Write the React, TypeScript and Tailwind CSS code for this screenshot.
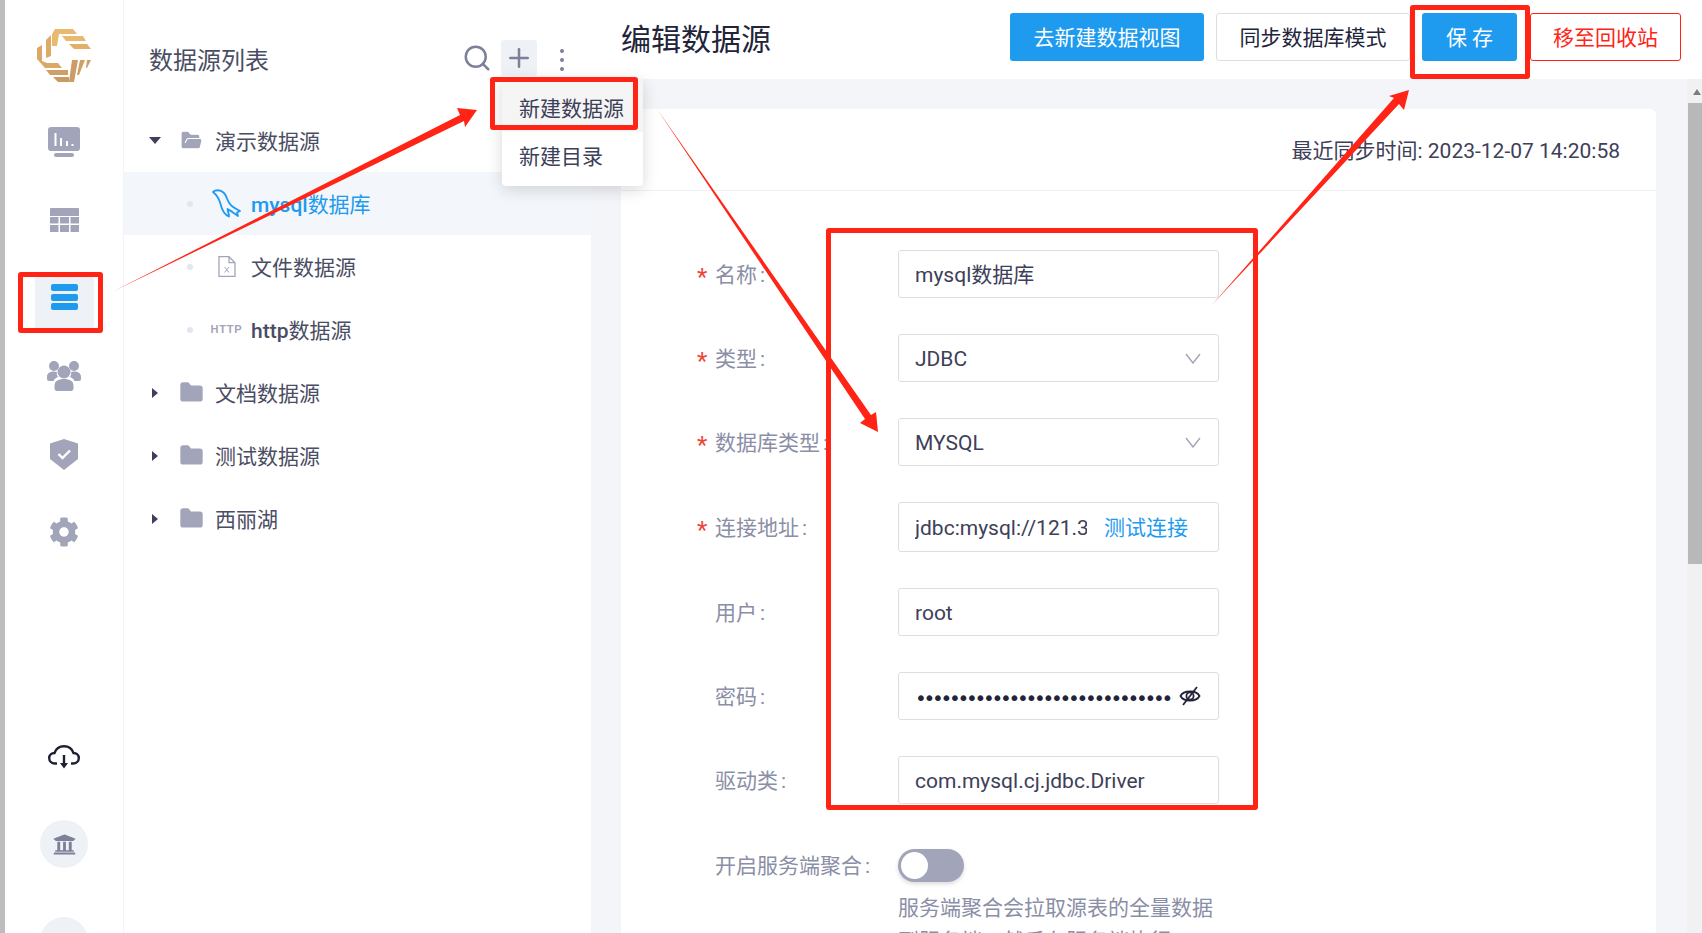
import { Plus, Search, Folder, FolderOpen } from "lucide-react";
import { FaCog, FaUniversity } from "react-icons/fa";

const font = "font-['Roboto','Noto_Sans_CJK_SC',sans-serif]";

function Logo() {
  return (
    <svg width="54" height="54" viewBox="0 0 54 54">
      <path d="M18 1H36L40 6H22L20 18H15V6Z" fill="#e8b96f" />
      <path d="M25 8H46L49 13H29Z" fill="#e8b96f" />
      <path d="M32 16H50L54 21H37Z" fill="#e0b06a" />
      <path d="M14 7V28L9 30V12Z" fill="#dcab66" />
      <path d="M0 20L5 17V33L10 35H21L25 40H8L0 31Z" fill="#d9a965" />
      <path d="M9 42H31V47H13Z" fill="#cfa066" />
      <path d="M16 49H32V54H21Z" fill="#c99a63" />
      <path d="M35 32H41L37 54H32Z" fill="#cb9c64" />
      <path d="M43 32H48L42 47H40Z" fill="#cfa066" />
      <path d="M50 32H54L50 40H49Z" fill="#cfa066" />
    </svg>
  );
}

function MonitorIcon() {
  return (
    <svg width="32" height="30" viewBox="0 0 32 30">
      <rect width="32" height="24" rx="3" fill="#a2a5b9" />
      <rect x="6" y="26" width="20" height="4" rx="2" fill="#a2a5b9" />
      <path d="M7.5 6v13M13 11v8M19 14v5M24.5 17v2" stroke="#fff" strokeWidth="2" />
    </svg>
  );
}

function TableIcon() {
  return (
    <svg width="29" height="24" viewBox="0 0 29 24" fill="#a2a5b9">
      <path d="M1 0h27a1 1 0 0 1 1 1v7H0V1a1 1 0 0 1 1-1z" />
      <rect y="9" width="8.5" height="6.5" />
      <rect x="10" y="9" width="9" height="6.5" />
      <rect x="20.5" y="9" width="8.5" height="6.5" />
      <rect y="17" width="8.5" height="7" />
      <rect x="10" y="17" width="9" height="7" />
      <rect x="20.5" y="17" width="8.5" height="7" />
    </svg>
  );
}

function UsersIcon() {
  return (
    <svg width="34" height="30" viewBox="0 0 34 30" fill="#a2a5b9">
      <circle cx="7" cy="5" r="5" />
      <circle cx="27" cy="5" r="5" />
      <path d="M0 16C0 12 3 10.5 7 10.5C8 10.5 9 10.7 10 11C9.5 12.5 10 14.5 11 16C8.5 17 7 18.5 6.5 20H2C1 20 0 19 0 18Z" />
      <path d="M34 16C34 12 31 10.5 27 10.5C26 10.5 25 10.7 24 11C24.5 12.5 24 14.5 23 16C25.5 17 27 18.5 27.5 20H32C33 20 34 19 34 18Z" />
      <circle cx="17" cy="11" r="6.5" />
      <path d="M7.5 25C7.5 20 11 18 17 18C23 18 26.5 20 26.5 25V27C26.5 29 25.5 30 24 30H10C8.5 30 7.5 29 7.5 27Z" />
    </svg>
  );
}

function ShieldIcon() {
  return (
    <svg width="28" height="31" viewBox="0 0 28 31">
      <path d="M14 0L28 4.5V20L14 31L0 20V4.5Z" fill="#a2a5b9" />
      <path d="M8.5 15L12.5 19L20 11.5" fill="none" stroke="#fff" strokeWidth="2.4" />
    </svg>
  );
}

function CloudIcon() {
  return (
    <svg width="32" height="24" viewBox="0 0 32 24" fill="none" stroke="#1d2035" strokeWidth="2.4">
      <path d="M9 18.5H7C3.5 18.5 1.2 16 1.2 13C1.2 10 3.5 8 6.5 8C8 3.5 11.5 1.2 16 1.2C20.5 1.2 24 3.5 25.5 8C28.5 8 30.8 10 30.8 13C30.8 16 28.5 18.5 25 18.5H23" />
      <path d="M16 10V20" />
      <path d="M12 18H20L16 23.5Z" fill="#1d2035" stroke="none" />
    </svg>
  );
}

function Dolphin() {
  return (
    <svg width="30" height="29" viewBox="0 0 30 29" fill="none" stroke="#1e9bef" strokeWidth="1.8" strokeLinejoin="round" strokeLinecap="round">
      <path d="M1 3C3 1 8 0 12 4C15 7 15 12 18 15C20 18 24 20 28 22L25 23.5L26 27L21 23.5C19 22 17 21 15.5 20C16 23 17 25 17 27.5C13 26 10 21 8.5 15C7.5 11 6 7 1 3Z" />
    </svg>
  );
}

function XlsIcon() {
  return (
    <svg width="18" height="21" viewBox="0 0 18 21" fill="none" stroke="#a2a5b9" strokeWidth="1.3">
      <path d="M1 .7h10l6 6v13.6H1z" />
      <path d="M11 .7v6h6" />
      <path d="M6.5 11l4.5 5.5M11 11l-4.5 5.5" strokeWidth="1" />
    </svg>
  );
}

function EyeSlash() {
  return (
    <svg width="22" height="22" viewBox="0 0 22 22" fill="none" stroke="#22243a" strokeWidth="1.8">
      <path d="M1.5 11C4.5 5 17.5 5 20.5 11C17.5 17 4.5 17 1.5 11Z" />
      <circle cx="11" cy="11" r="3.6" />
      <path d="M18 2L4 20" />
    </svg>
  );
}

function SelectArrow() {
  return (
    <svg width="16" height="11" viewBox="0 0 16 11" fill="none" stroke="#a2a5b9" strokeWidth="1.4">
      <path d="M1 1L8 10L15 1" />
    </svg>
  );
}

function TreeRow({ label, open }: { label: string; open?: boolean }) {
  const Icon = open ? FolderOpen : Folder;
  return (
    <div className="flex h-[63px] items-center text-[21px] text-[#4a4d63]">
      <div className="flex w-[50px] justify-center pl-[12px]">
        <span className={open ? "border-x-[6px] border-t-[7px] border-x-transparent border-t-[#3d4058]" : "border-y-[5px] border-l-[6px] border-y-transparent border-l-[#3d4058]"} />
      </div>
      <Icon size={25} className="ml-[5px]" fill="#a2a5b9" stroke={open ? "#fff" : "#a2a5b9"} strokeWidth={open ? 1 : 1.5} />
      <span className="ml-[11px] pt-[5px]">{label}</span>
    </div>
  );
}

function LeafRow({ name, rest, icon, active }: { name?: string; rest: string; icon: React.ReactNode; active?: boolean }) {
  return (
    <div className={`flex h-[63px] items-center pl-[63px] text-[21px] ${active ? "bg-[#f3f6fa] text-[#1e9bef]" : "text-[#4a4d63]"}`}>
      <span className="h-[6px] w-[6px] rounded-full bg-[#e3e6ee]" />
      <div className="flex w-[58px] justify-center pl-[9px]">{icon}</div>
      <span className="pt-[5px]">
        {name && <span className="font-medium">{name}</span>}
        {rest}
      </span>
    </div>
  );
}

function Field({ label, required, h, children }: { label: string; required?: boolean; h: string; children: React.ReactNode }) {
  return (
    <div className={`flex items-center ${h}`}>
      <label className="relative w-[277px] pl-[94px] pt-[3px] text-[21px] text-[#8a8ea6]">
        {required && <span className="absolute left-[76px] top-[2px] text-[24px] text-[#f04438]">*</span>}
        {label}<span className="ml-[3px]">:</span>
      </label>
      <div className="flex h-full w-[321px] items-center rounded-[3px] border border-[#dcdee2] pl-[16px] pr-[17px] text-[21px] text-[#3d4058]">
        {children}
      </div>
    </div>
  );
}

function Arrow({ points }: { points: string }) {
  return <polygon points={points} fill="#ff2415" />;
}

export default function App() {
  return (
    <div className={`relative flex h-[933px] w-[1702px] overflow-hidden bg-white ${font}`}>
      <div className="w-[5px] shrink-0 bg-[#bdbdbd]" />

      <nav className="relative flex w-[119px] shrink-0 flex-col items-center border-r border-[#f3f4f7] pt-[28px] [&>*]:shrink-0">
        <Logo />
        <div className="mt-[45px]"><MonitorIcon /></div>
        <div className="mt-[51px]"><TableIcon /></div>
        <div className="mt-[45px] flex h-[52px] w-[59px] justify-center rounded-[2px] bg-[#eef1f6] pt-[7px]">
          <div className="flex w-[27px] flex-col gap-[2.5px]">
            <span className="h-[7px] rounded-[2px] bg-[#1e9bef]" />
            <span className="h-[7px] rounded-[2px] bg-[#1e9bef]" />
            <span className="h-[7px] rounded-[2px] bg-[#1e9bef]" />
          </div>
        </div>
        <div className="mt-[32px]"><UsersIcon /></div>
        <div className="mt-[48px]"><ShieldIcon /></div>
        <FaCog className="mt-[47px]" size={30} color="#a2a5b9" />
        <div className="mt-[198px]"><CloudIcon /></div>
        <div className="mt-[51px] flex h-[48px] w-[48px] items-center justify-center rounded-full bg-[#eef1f6]">
          <FaUniversity size={23} color="#7d8099" />
        </div>
        <div className="mt-[49px] h-[48px] w-[48px] rounded-full bg-[#eef1f6]" />
      </nav>

      <aside className="w-[467px] shrink-0">
        <div className="flex h-[109px] items-start pl-[25px] pr-[27px] pt-[40px]">
          <h2 className="flex-1 pt-[1px] text-[24px] leading-[40px] text-[#4a4d63]">数据源列表</h2>
          <Search size={30} stroke="#7d8099" className="mr-[9px] mt-[3px]" strokeWidth={2} />
          <div className="flex h-[36px] w-[36px] items-center justify-center rounded-[3px] bg-[#eef1f6]">
            <Plus size={30} stroke="#7d8099" strokeWidth={2} />
          </div>
          <div className="ml-[23px] mt-[9px] flex flex-col gap-[5px]">
            <span className="h-[4px] w-[4px] rounded-full bg-[#7d8099]" />
            <span className="h-[4px] w-[4px] rounded-full bg-[#7d8099]" />
            <span className="h-[4px] w-[4px] rounded-full bg-[#7d8099]" />
          </div>
        </div>
        <TreeRow label="演示数据源" open />
        <LeafRow name="mysql" rest="数据库" icon={<Dolphin />} active />
        <LeafRow rest="文件数据源" icon={<XlsIcon />} />
        <LeafRow
          name="http"
          rest="数据源"
          icon={<span className="font-['Liberation_Sans',sans-serif] text-[11px] font-bold tracking-[0.8px] text-[#a2a5b9]">HTTP</span>}
        />
        <TreeRow label="文档数据源" />
        <TreeRow label="测试数据源" />
        <TreeRow label="西丽湖" />
      </aside>

      <main className="flex min-w-0 flex-1 flex-col bg-[#f3f5f8]">
        <header className="flex h-[79px] shrink-0 items-start bg-white pl-[30px] pr-[21px] pt-[13px]">
          <h1 className="flex-1 pt-[2px] text-[30px] leading-[50px] text-[#22243a]">编辑数据源</h1>
          <button className="h-[48px] w-[194px] rounded-[3px] bg-[#1e9bef] pt-[3px] text-[21px] text-white">去新建数据视图</button>
          <button className="ml-[12px] h-[48px] w-[194px] rounded-[3px] border border-[#dcdee2] bg-white pt-[3px] text-[21px] text-[#22243a]">同步数据库模式</button>
          <button className="ml-[12px] h-[48px] w-[95px] rounded-[3px] bg-[#1e9bef] pt-[3px] text-[21px] text-white">保 存</button>
          <button className="ml-[13px] h-[48px] w-[151px] rounded-[3px] border border-[#ff2415] bg-white pt-[3px] text-[21px] text-[#ff2415]">移至回收站</button>
        </header>
        <div className="flex min-h-0 flex-1">
          <div className="min-w-0 flex-1 pl-[30px] pr-[31px] pt-[30px]">
            <section className="h-[900px] rounded-[6px] bg-white">
              <div className="flex h-[82px] items-center justify-end border-b border-[#eef0f4] pr-[36px] pt-[5px] text-[21px] text-[#3d4058]">
                最近同步时间: 2023-12-07 14:20:58
              </div>
              <form className="flex flex-col gap-[36px] pt-[59px]">
                <Field label="名称" required h="h-[48px]"><span className="pt-[3px]">mysql数据库</span></Field>
                <Field label="类型" required h="h-[48px]">
                  <span className="flex-1 pt-[3px]">JDBC</span>
                  <SelectArrow />
                </Field>
                <Field label="数据库类型" required h="h-[48px]">
                  <span className="flex-1 pt-[3px]">MYSQL</span>
                  <SelectArrow />
                </Field>
                <Field label="连接地址" required h="h-[50px]">
                  <span className="w-[172px] overflow-hidden whitespace-nowrap pt-[3px]">jdbc:mysql://121.37</span>
                  <span className="ml-[17px] whitespace-nowrap pt-[3px] text-[#1e9bef]">测试连接</span>
                </Field>
                <Field label="用户" h="h-[48px]"><span className="pt-[3px]">root</span></Field>
                <Field label="密码" h="h-[48px]">
                  <span className="w-[260px] overflow-hidden whitespace-nowrap pt-[3px] font-['DejaVu_Sans',sans-serif] text-[20px] tracking-[-3.3px] text-[#22243a]">•••••••••••••••••••••••••••••••</span>
                  <div className="ml-[6px]"><EyeSlash /></div>
                </Field>
                <Field label="驱动类" h="h-[48px]"><span className="pt-[4px]">com.mysql.cj.jdbc.Driver</span></Field>
                <div className="mt-[9px] flex items-start">
                  <label className="w-[277px] pl-[94px] pt-[1px] text-[21px] leading-[33px] text-[#8a8ea6]">开启服务端聚合<span className="ml-[3px]">:</span></label>
                  <div>
                    <div className="flex h-[33px] w-[66px] items-center rounded-full bg-[#a2a5b9] pl-[3px] shadow-[0_2px_4px_rgba(0,0,0,0.15)]">
                      <span className="h-[27px] w-[27px] rounded-full bg-white" />
                    </div>
                    <p className="mt-[10px] w-[320px] text-[21px] leading-[33px] text-[#8a8ea6]">服务端聚合会拉取源表的全量数据到服务端，然后在服务端执行SQL</p>
                  </div>
                </div>
              </form>
            </section>
          </div>
          <div className="relative w-[15px] shrink-0 bg-[#f1f1f1]">
            <span className="absolute left-[6px] top-[10px] border-x-[4.5px] border-b-[6px] border-x-transparent border-b-[#7d7d7d]" />
            <div className="ml-[1px] mt-[24px] h-[461px] bg-[#b8b8b8]" />
          </div>
        </div>
      </main>

      <div className="absolute left-[502px] top-[78px] w-[141px] rounded-[4px] bg-white text-[21px] text-[#3d4058] shadow-[0_4px_16px_rgba(0,0,0,0.15)]">
        <div className="flex h-[54px] items-center bg-[#f5f5f5] pl-[17px] pt-[9px]">新建数据源</div>
        <div className="flex h-[54px] items-center pb-[3px] pl-[17px]">新建目录</div>
      </div>

      <div className="pointer-events-none absolute left-[18px] top-[272px] h-[61px] w-[85px] rounded-[3px] border-[5px] border-[#ff2415]" />
      <div className="pointer-events-none absolute left-[490px] top-[77px] h-[53px] w-[148px] rounded-[3px] border-[5px] border-[#ff2415]" />
      <div className="pointer-events-none absolute left-[1410px] top-[5px] h-[74px] w-[120px] rounded-[3px] border-[5px] border-[#ff2415]" />
      <div className="pointer-events-none absolute left-[826px] top-[228px] h-[582px] w-[432px] rounded-[3px] border-[5px] border-[#ff2415]" />

      <svg className="pointer-events-none absolute left-0 top-0" width="1702" height="933">
        <Arrow points="114,291 460,115 457,108 477,110 465,127 464,121" />
        <Arrow points="657,109 871,415 876,412 878,432 860,423 865,419" />
        <Arrow points="1211,306 1394,98 1389,96 1409,90 1404,110 1399,104" />
      </svg>
    </div>
  );
}
